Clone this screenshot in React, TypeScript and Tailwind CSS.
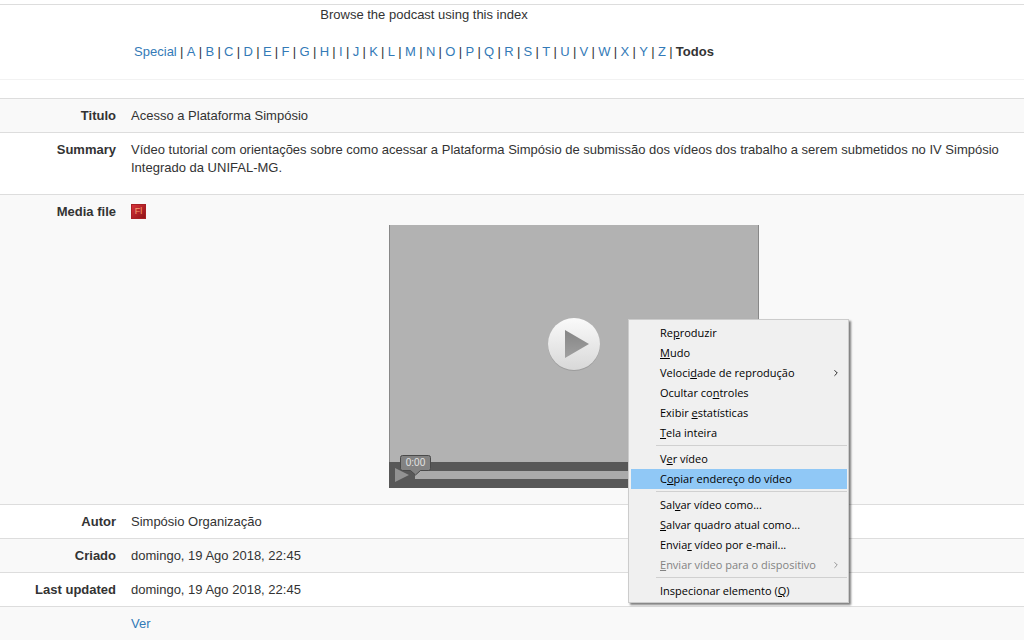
import { useState } from "react";
import { ChevronRight } from "lucide-react";

const LETTERS = "ABCDEFGHIJKLMNOPQRSTUVWXYZ".split("");

interface MenuEntry {
  label: string;
  // index of the access key letter inside the label
  accessKey: number;
  submenu?: boolean;
  disabled?: boolean;
}

const MENU_GROUPS: MenuEntry[][] = [
  [
    { label: "Reproduzir", accessKey: 2 },
    { label: "Mudo", accessKey: 0 },
    { label: "Velocidade de reprodução", accessKey: 6, submenu: true },
    { label: "Ocultar controles", accessKey: 10 },
    { label: "Exibir estatísticas", accessKey: 7 },
    { label: "Tela inteira", accessKey: 0 },
  ],
  [
    { label: "Ver vídeo", accessKey: 1 },
    { label: "Copiar endereço do vídeo", accessKey: 1 },
  ],
  [
    { label: "Salvar vídeo como...", accessKey: 3 },
    { label: "Salvar quadro atual como...", accessKey: 0 },
    { label: "Enviar vídeo por e-mail...", accessKey: 5 },
    { label: "Enviar vídeo para o dispositivo", accessKey: 0, submenu: true, disabled: true },
  ],
  [{ label: "Inspecionar elemento (Q)", accessKey: 22 }],
];

function LetterIndex() {
  return (
    <nav className="flex justify-center gap-[3px] whitespace-nowrap">
      <a href="#special" className="text-[#337ab7]">Special</a>
      <span className="w-1 text-center">|</span>
      {LETTERS.map((letter) => (
        <span key={letter} className="flex gap-[3px]">
          <a href={`#${letter}`} className="text-[#337ab7]">{letter}</a>
          <span className="w-1 text-center">|</span>
        </span>
      ))}
      <b>Todos</b>
    </nav>
  );
}

function ContextMenu() {
  const [active, setActive] = useState("Copiar endereço do vídeo");

  return (
    <div
      role="menu"
      className="absolute left-[239px] top-[94px] w-[221px] border border-[#ccc] bg-[#f0f0f0] pb-px pl-[2px] pr-px pt-[3px] font-['Open_Sans',sans-serif] text-[11px] leading-5 text-black shadow-[2px_2px_2px_rgba(0,0,0,0.5)]"
    >
      {MENU_GROUPS.map((group, i) => (
        <div key={i} role="group">
          {i > 0 && <div className="mb-[3px] ml-[25px] mt-[2px] h-px bg-[#d0d0d0]" />}
          {group.map(({ label, accessKey, submenu, disabled }) => (
            <button
              key={label}
              type="button"
              role="menuitem"
              disabled={disabled}
              onMouseEnter={() => setActive(label)}
              className={`flex h-5 w-full items-center justify-between pl-[29px] pr-[6px] text-left ${
                disabled ? "text-[#838383]" : ""
              } ${active === label ? "bg-[#90c8f6]" : ""}`}
            >
              <span className="whitespace-nowrap">
                {label.slice(0, accessKey)}
                <u>{label[accessKey]}</u>
                {label.slice(accessKey + 1)}
              </span>
              {submenu && <ChevronRight className="h-[10px] w-[10px]" strokeWidth={2} />}
            </button>
          ))}
        </div>
      ))}
    </div>
  );
}

function VideoPlayer() {
  const [position, setPosition] = useState(0);

  return (
    <div className="relative mx-auto mb-[9px] mt-1 w-[370px]">
      <div className="flex h-[263px] flex-col border-x border-[#888] bg-[#b2b2b2]">
        <div className="flex flex-1 items-center justify-center">
          <button type="button" aria-label="Reproduzir" className="rounded-full">
            <svg viewBox="0 0 54 54" className="h-[54px] w-[54px]">
              <defs>
                <linearGradient id="disc" x1="0" y1="0" x2="0" y2="1">
                  <stop offset="0" stopColor="#fafafa" />
                  <stop offset="1" stopColor="#d8d8d8" />
                </linearGradient>
                <linearGradient id="arrow" x1="0" y1="0" x2="0" y2="1">
                  <stop offset="0" stopColor="#858585" />
                  <stop offset="1" stopColor="#a0a0a0" />
                </linearGradient>
              </defs>
              <circle cx="27" cy="28" r="26" fill="#8e8e8e" opacity="0.6" />
              <circle cx="27" cy="27" r="26" fill="url(#disc)" />
              <path d="M18 13v28l24-14z" fill="url(#arrow)" />
            </svg>
          </button>
        </div>
        <div className="relative -mx-px flex h-[26px] items-center bg-[#585858] pl-[6px]">
          <button type="button" aria-label="Reproduzir">
            <svg viewBox="0 0 15 16" className="block h-4 w-[15px]">
              <path d="M0 1v14l14-7z" fill="#929292" />
            </svg>
          </button>
          <input
            type="range"
            aria-label="Posição"
            min={0}
            max={100}
            value={position}
            onChange={(e) => setPosition(Number(e.target.value))}
            className="ml-[5px] h-2 flex-1 appearance-none bg-[#aaa] [&::-webkit-slider-thumb]:appearance-none"
          />
          {/* Time bubble above the scrubber */}
          <div className="absolute -top-[7px] left-[11px] h-[21px] w-[31px]">
            <svg viewBox="0 0 31 21" className="absolute inset-0">
              <path
                d="M2.500 .5h26a2 2 0 0 1 2 2v11a2 2 0 0 1-2 2h-8l-5 4.500-5-4.500h-8a2 2 0 0 1-2-2v-11a2 2 0 0 1 2-2z"
                fill="#828282"
                stroke="#4a4a4a"
              />
            </svg>
            <span className="relative block text-center text-[10px] leading-4 text-[#e4e4e4]">0:00</span>
          </div>
        </div>
      </div>
      <ContextMenu />
    </div>
  );
}

function FlashIcon() {
  return (
    <span className="inline-block h-[15px] w-[15px] border border-[#a82024] bg-linear-to-br from-[#d8323a] to-[#8f1418] text-center text-[9px] leading-[13px] text-[#f5a070]">
      Fl
    </span>
  );
}

function Row({ label, children }: { label?: string; children: React.ReactNode }) {
  return (
    <tr className="border-t border-[#ddd] align-top odd:bg-[#f9f9f9]">
      <th scope="row" className="w-[124px] px-2 pb-[7px] pt-2 text-right font-bold">{label}</th>
      <td className="px-[7px] pb-[7px] pt-2">{children}</td>
    </tr>
  );
}

export default function App() {
  return (
    <main className="min-h-screen bg-white pt-1 font-['Liberation_Sans',Arial,sans-serif] text-[13px] leading-[18px] text-[#333]">
      <header className="border-b border-t border-b-[#f2f2f2] border-t-[#ddd] pb-[18px] pr-44 pt-px text-center">
        <p className="mb-[19px]">Browse the podcast using this index</p>
        <LetterIndex />
      </header>

      <table className="mt-[18px] w-full table-fixed border-collapse">
        <tbody>
          <Row label="Titulo">Acesso a Plataforma Simpósio</Row>
          <Row label="Summary">
            <p className="mb-[10px]">
              Vídeo tutorial com orientações sobre como acessar a Plataforma Simpósio de submissão dos vídeos dos
              trabalho a serem submetidos no IV Simpósio Integrado da UNIFAL-MG.
            </p>
          </Row>
          <Row label="Media file">
            <div className="flex h-[18px] items-start pt-px">
              <FlashIcon />
            </div>
            <VideoPlayer />
          </Row>
          <Row label="Autor">Simpósio Organização</Row>
          <Row label="Criado">domingo, 19 Ago 2018, 22:45</Row>
          <Row label="Last updated">domingo, 19 Ago 2018, 22:45</Row>
          <Row>
            <a href="#ver" className="text-[#337ab7]">Ver</a>
          </Row>
        </tbody>
      </table>
    </main>
  );
}
